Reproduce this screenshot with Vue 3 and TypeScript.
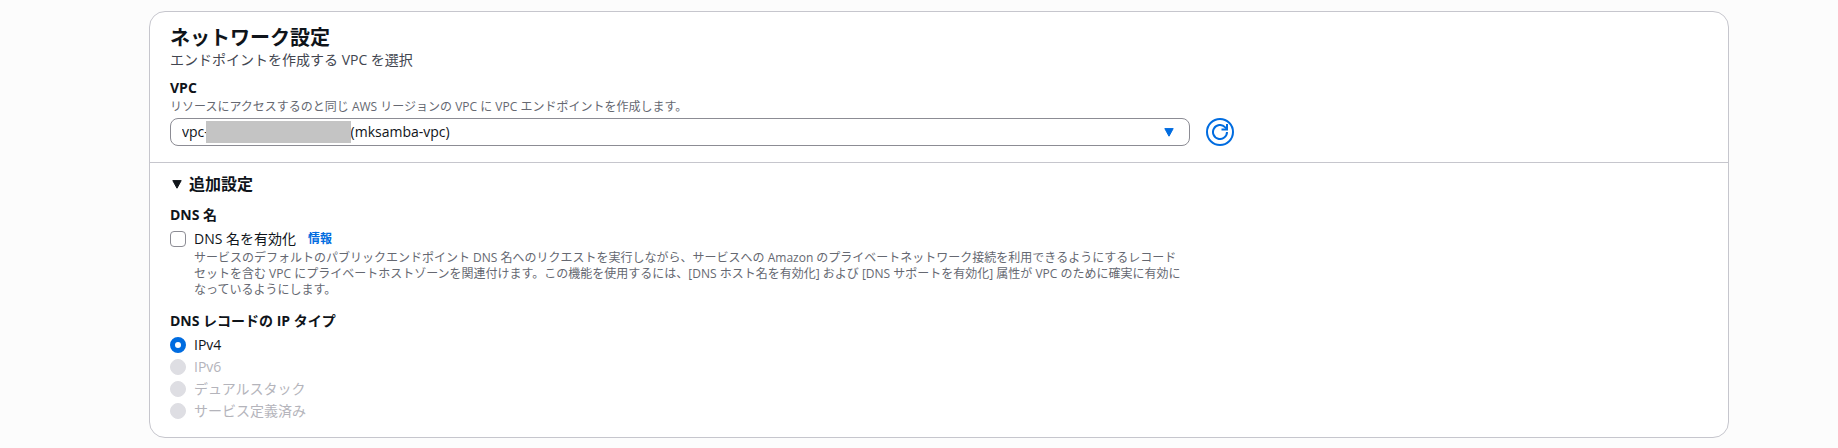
<script setup lang="ts">
import { ref } from 'vue'

interface RecordType {
  value: string
  label: string
  disabled: boolean
}

const maskedId = '\u00a0'.repeat(39)
const vpcs = [{ value: 'mksamba', label: `vpc-${maskedId}(mksamba-vpc)` }]
const recordTypes: RecordType[] = [
  { value: 'ipv4', label: 'IPv4', disabled: false },
  { value: 'ipv6', label: 'IPv6', disabled: true },
  { value: 'dualstack', label: 'デュアルスタック', disabled: true },
  { value: 'service-defined', label: 'サービス定義済み', disabled: true },
]

const selectedVpc = ref('mksamba')
const recordType = ref('ipv4')
const dnsEnabled = ref(false)
const expanded = ref(true)
</script>

<template>
  <main class="page">
    <section class="card">
      <header class="network">
        <h2 class="title">ネットワーク設定</h2>
        <p class="subtitle">エンドポイントを作成する VPC を選択</p>
        <label class="label" for="vpc">VPC</label>
        <p id="vpc-hint" class="hint">リソースにアクセスするのと同じ AWS リージョンの VPC に VPC エンドポイントを作成します。</p>
        <div class="columns">
          <div class="select-box">
            <select id="vpc" v-model="selectedVpc" class="select" aria-describedby="vpc-hint">
              <option v-for="v in vpcs" :key="v.value" :value="v.value">{{ v.label }}</option>
            </select>
            <span class="mask"></span>
            <svg class="caret" viewBox="0 0 10 9" aria-hidden="true">
              <path d="M.8.6h8.4L5 8.2z" fill="#006ce0" stroke="#006ce0" stroke-linejoin="round" />
            </svg>
          </div>
          <div class="action">
            <button class="refresh" type="button" aria-label="更新">
              <svg viewBox="0 0 16 16" aria-hidden="true">
                <path d="M15 8a7 7 0 1 1-2-4.9L15 5" />
                <path d="M15 0v5.5h-5.5" />
              </svg>
            </button>
          </div>
        </div>
      </header>

      <div class="additional">
        <h3 class="expander-heading">
          <button class="expander" type="button" :aria-expanded="expanded" @click="expanded = !expanded">
            <svg class="expander-icon" viewBox="0 0 10 9" aria-hidden="true">
              <path d="M.8.6h8.4L5 8.2z" fill="#0f141a" stroke="#0f141a" stroke-linejoin="round" />
            </svg>
            追加設定
          </button>
        </h3>
        <template v-if="expanded">
          <h4 class="label dns-label">DNS 名</h4>
          <div class="option">
            <input id="dns" v-model="dnsEnabled" class="checkbox" type="checkbox" aria-describedby="dns-hint" />
            <label for="dns">DNS 名を有効化</label>
            <a class="info" href="#">情報</a>
          </div>
          <p id="dns-hint" class="hint dns-hint">
            サービスのデフォルトのパブリックエンドポイント DNS 名へのリクエストを実行しながら、サービスへの Amazon のプライベートネットワーク接続を利用できるようにするレコード<br />
            セットを含む VPC にプライベートホストゾーンを関連付けます。この機能を使用するには、[DNS ホスト名を有効化] および [DNS サポートを有効化] 属性が VPC のために確実に有効に<br />
            なっているようにします。
          </p>
          <fieldset class="types">
            <legend class="label">DNS レコードの IP タイプ</legend>
            <div v-for="t in recordTypes" :key="t.value" class="option" :class="{ disabled: t.disabled }">
              <input :id="t.value" v-model="recordType" class="radio" type="radio" name="record-type" :value="t.value" :disabled="t.disabled" />
              <label :for="t.value">{{ t.label }}</label>
            </div>
          </fieldset>
        </template>
      </div>
    </section>
  </main>
</template>

<style>
body {
  background: #fcfcfc;
}
</style>

<style scoped>
.page {
  box-sizing: border-box;
  padding: 11px 109px 10px 149px;
  font-family: "Open Sans", "Noto Sans CJK JP", sans-serif;
  font-size: 14px;
  line-height: 22px;
  color: #0f141a;
}
.card {
  border: 1px solid #c6c6cd;
  border-radius: 16px;
  background: #fff;
}
.network {
  padding: 14px 20px 16px;
  border-bottom: 1px solid #c6c6cd;
}
h2, h3, h4, p {
  margin: 0;
}
.title {
  font-size: 20px;
  line-height: 24px;
}
.subtitle {
  line-height: 20px;
  color: #424650;
}
.label {
  display: block;
  padding: 0;
  font-size: 14px;
  font-weight: 700;
  line-height: 22px;
}
.network .label {
  margin-top: 7px;
}
.hint {
  font-size: 12px;
  line-height: 16px;
  color: #656871;
}
.columns {
  display: grid;
  grid-template-columns: 2fr 1fr;
  column-gap: 8px;
  margin-top: 3px;
}
.select-box {
  position: relative;
}
.select {
  display: block;
  box-sizing: border-box;
  width: 100%;
  height: 28px;
  padding: 0 32px 0 11px;
  border: 1px solid #8c8c94;
  border-radius: 8px;
  background: #fff;
  color: inherit;
  font: inherit;
  appearance: none;
}
.mask {
  position: absolute;
  top: 3px;
  left: 36px;
  width: 145px;
  height: 22px;
  background: #c4c4c4;
  pointer-events: none;
}
.caret {
  position: absolute;
  top: 10px;
  right: 16px;
  width: 10px;
  height: 9px;
  pointer-events: none;
}
.action {
  padding-left: 8px;
}
.refresh {
  display: flex;
  align-items: center;
  justify-content: center;
  box-sizing: border-box;
  width: 28px;
  height: 28px;
  padding: 0;
  border: 2px solid #006ce0;
  border-radius: 50%;
  background: #fff;
}
.refresh svg {
  width: 16px;
  height: 16px;
  fill: none;
  stroke: #006ce0;
  stroke-width: 2;
}
.additional {
  padding: 10px 20px 15px;
}
.expander-heading {
  display: flex;
}
.expander {
  display: flex;
  align-items: center;
  gap: 7px;
  padding: 0 0 0 2px;
  border: 0;
  background: none;
  color: inherit;
  font: inherit;
  font-size: 16px;
  font-weight: 700;
  line-height: 22px;
}
.expander-icon {
  width: 10px;
  height: 9px;
}
.dns-label {
  margin: 9px 0 2px;
}
.option {
  display: flex;
  align-items: center;
}
.checkbox, .radio {
  flex: none;
  box-sizing: border-box;
  width: 16px;
  height: 16px;
  margin: 0 8px 0 0;
  appearance: none;
  border: 1px solid #8c8c94;
  background: #fff;
}
.checkbox {
  border-radius: 4px;
}
.checkbox:checked {
  border: 4px solid #006ce0;
}
.radio {
  border-radius: 50%;
}
.radio:checked {
  border: 5px solid #006ce0;
}
.radio:disabled {
  border-color: #dedee3;
  background: #dedee3;
}
.disabled {
  color: #b4b4bb;
}
.info {
  margin-left: 12px;
  color: #006ce0;
  font-size: 12px;
  font-weight: 700;
  text-decoration: none;
}
.dns-hint {
  padding-left: 24px;
  white-space: nowrap;
}
.types {
  min-width: 0;
  margin: 12px 0 0;
  padding: 0;
  border: 0;
}
.types .label {
  margin-bottom: 2px;
}
</style>
